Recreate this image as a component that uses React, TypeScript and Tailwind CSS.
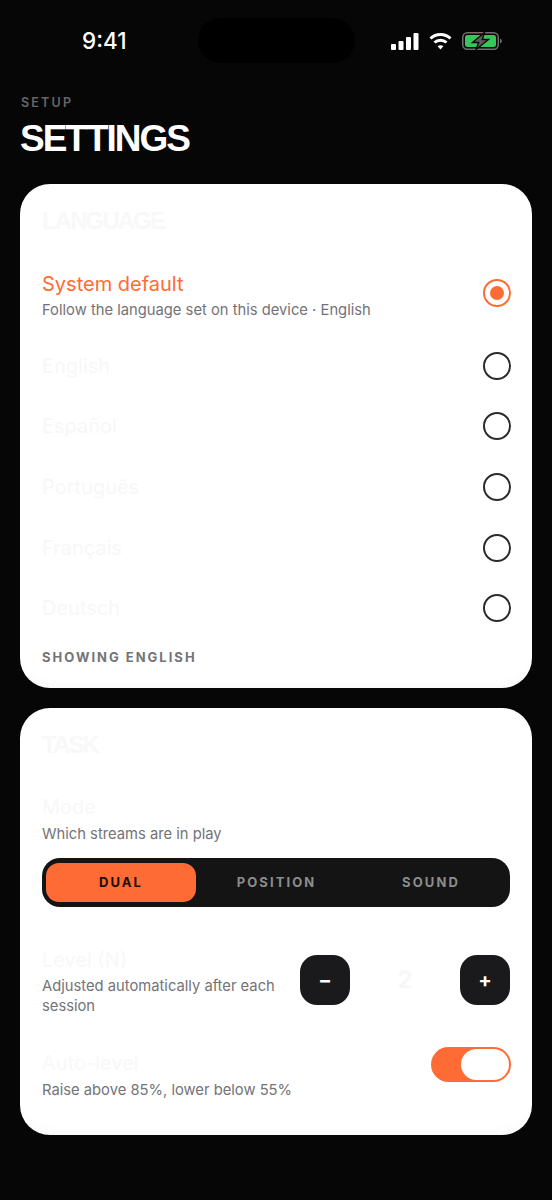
const inter = { fontFamily: 'Inter, "Noto Sans", sans-serif' };
const arial = { fontFamily: '"Liberation Sans", sans-serif' };

const languages = ['English', 'Español', 'Português', 'Français', 'Deutsch'];

function StatusBar() {
  return (
    <div className="flex h-[95px] items-start">
      <div className="mt-[27px] w-[193px] pl-[82px] text-[22.5px] font-medium leading-[28px] text-white">9:41</div>
      <div className="mt-[18px] ml-[5px] h-[45px] w-[157px] shrink-0 rounded-full bg-black" />
      <div className="mt-[32px] ml-[36px] flex items-center gap-[10px]">
        <svg width="28" height="17" viewBox="0 0 28 17" fill="#fff">
          <rect x="0" y="11" width="5" height="6" rx="1" />
          <rect x="7.5" y="8" width="5" height="9" rx="1" />
          <rect x="15" y="4" width="5" height="13" rx="1" />
          <rect x="22.5" y="0" width="5" height="17" rx="1" />
        </svg>
        <svg width="23" height="18" viewBox="0 0 23 18" fill="none" stroke="#fff" strokeWidth="3">
          <path d="M1.5 6.5C7 1.2 16 1.2 21.5 6.5" />
          <path d="M5.5 10.5C8.8 7.5 14.2 7.5 17.5 10.5" />
          <path d="M11.5 17.5L8.6 14.2C10.2 12.9 12.8 12.9 14.4 14.2Z" fill="#fff" stroke="none" />
        </svg>
        <svg width="41" height="18" viewBox="0 0 41 18" fill="none">
          <rect x="0.75" y="0.75" width="35.5" height="16.5" rx="4.5" stroke="#6f6f6f" strokeWidth="1.5" />
          <rect x="3" y="3" width="31" height="12" rx="2.5" fill="#34c759" />
          <path d="M38 6.5c1.2.4 1.8 1.4 1.8 2.5s-.6 2.1-1.8 2.5z" fill="#6f6f6f" />
          <path d="M22.5 0.5L10.5 10.5h6.2L14 17.5L26.5 7.5h-6.2z" fill="#5c5c5c" stroke="#0a0a0a" strokeWidth="1.4" />
        </svg>
      </div>
    </div>
  );
}

function Radio({ on }: { on?: boolean }) {
  return (
    <span className={`-mr-[0.5px] flex h-[28px] w-[28px] shrink-0 items-center justify-center rounded-full border-[2.5px] ${on ? 'mb-[4px] border-[#ff6b35]' : 'border-[#2b2b2b]'}`}>
      {on && <span className="h-[14px] w-[14px] rounded-full bg-[#ff6b35]" />}
    </span>
  );
}

function Heading({ children }: { children: string }) {
  return (
    <h2 className="text-[24px] font-bold leading-[30px] tracking-[-1.9px] text-[#f8f8f8]" style={arial}>
      {children}
    </h2>
  );
}

export default function App() {
  return (
    <main className="min-h-[1200px] w-[552px] bg-[#060606]" style={inter}>
      <StatusBar />
      <div className="px-[20px]">
        <p className="pl-px text-[12.5px] font-semibold leading-[16px] tracking-[2.2px] text-[#666]">SETUP</p>
        <h1 className="mt-[6px] text-[37px] font-bold leading-[44px] tracking-[-2px] text-white" style={arial}>
          SETTINGS
        </h1>

        <section className="mt-[23px] h-[504px] rounded-[30px] bg-white px-[22px] pt-[22px] shadow-[inset_0_-12px_12px_-10px_rgba(0,0,0,0.04)]">
          <Heading>LANGUAGE</Heading>
          <div className="mt-[26px] flex h-[66px] items-center justify-between">
            <div>
              <div className="text-[20px] font-normal leading-[26px] text-[#ff6b35]">System default</div>
              <div className="mt-[3px] text-[14.75px] leading-[20px] text-[#737378]">Follow the language set on this device · English</div>
            </div>
            <Radio on />
          </div>
          <div className="mt-[7.5px]">
            {languages.map((l) => (
              <div key={l} className="flex h-[60.6px] items-center justify-between">
                <span className="text-[20px] leading-[26px] text-[#f7f7f7]">{l}</span>
                <Radio />
              </div>
            ))}
          </div>
          <p className="mt-[10.5px] text-[13px] font-bold leading-[16px] tracking-[2px] text-[#737378]">SHOWING ENGLISH</p>
        </section>

        <section className="mt-[20px] h-[427px] rounded-[30px] bg-white px-[22px] pt-[22px] shadow-[inset_0_-12px_12px_-10px_rgba(0,0,0,0.04)]">
          <Heading>TASK</Heading>
          <div className="mt-[34px] text-[20px] leading-[26px] text-[#f8f8f8]">Mode</div>
          <div className="mt-[4px] text-[14.75px] leading-[20px] text-[#737378]">Which streams are in play</div>
          <div className="mt-[14px] flex h-[49px] items-center rounded-[18px] bg-[#141414] pl-[4px] pr-[5px] text-[13px] font-bold tracking-[2.1px]">
            <div className="flex h-[39px] w-[150px] items-center justify-center rounded-[13px] bg-[#ff6b35] text-[#1a0d07]">DUAL</div>
            <div className="flex w-[161px] items-center justify-center text-[#8c8c8c]">POSITION</div>
            <div className="flex flex-1 items-center justify-center text-[#8c8c8c]">SOUND</div>
          </div>

          <div className="mt-[40px] flex items-start justify-between">
            <div className="w-[250px]">
              <div className="text-[20px] leading-[26px] text-[#f8f8f8]">Level (N)</div>
              <div className="mt-[3px] text-[14.75px] leading-[20px] text-[#737378]">Adjusted automatically after each session</div>
            </div>
            <div className="mt-[8px] flex items-center">
              <button className="flex h-[50px] w-[50px] items-center justify-center rounded-[17px] bg-[#1a1a1c] text-[20px] font-bold leading-none text-white">−</button>
              <span className="w-[110px] text-center text-[24px] font-bold text-[#f7f7f7]">2</span>
              <button className="flex h-[50px] w-[50px] items-center justify-center rounded-[17px] bg-[#1a1a1c] text-[20px] font-bold leading-none text-white">+</button>
            </div>
          </div>

          <div className="mt-[31px] flex items-start justify-between">
            <div>
              <div className="mt-[3px] text-[20px] leading-[26px] text-[#f8f8f8]">Auto-level</div>
              <div className="mt-[4px] text-[14.75px] leading-[20px] text-[#737378]">Raise above 85%, lower below 55%</div>
            </div>
            <div className="-mr-[0.5px] flex h-[35px] w-[79.5px] items-center justify-end rounded-full bg-[#ff6b35] pr-[2px]">
              <div className="h-[31px] w-[48px] rounded-full bg-white" />
            </div>
          </div>
        </section>
      </div>
    </main>
  );
}
